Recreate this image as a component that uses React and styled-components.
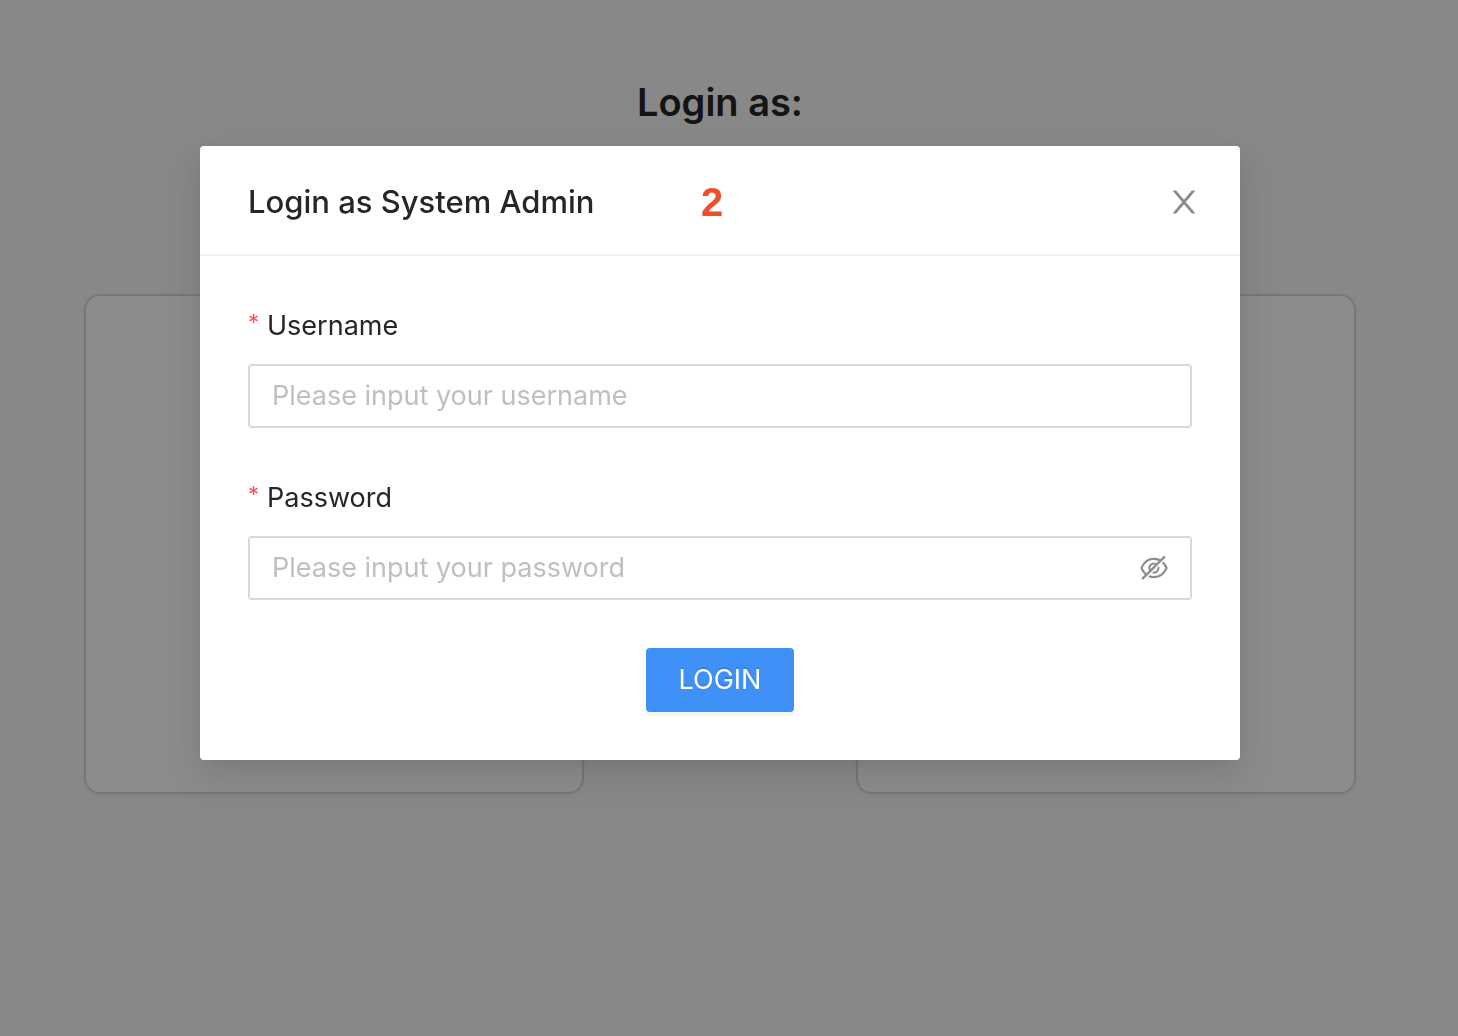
import React from "react";
import styled, { createGlobalStyle } from "styled-components";
import { AiOutlineEyeInvisible } from "react-icons/ai";

const GlobalStyle = createGlobalStyle`
  *, *::before, *::after { box-sizing: border-box; }
  body {
    margin: 0;
    background: #f8f8f8;
    color: #262626;
    font-family: Inter, "Liberation Sans", sans-serif;
    font-size: 27px;
    line-height: 44px;
  }
`;

const Page = styled.main`
  min-height: 100vh;
  padding: 72px 102px 0 84px;
`;

const PageTitle = styled.h1`
  margin: 0;
  font-size: 38px;
  font-weight: 600;
  line-height: 60px;
  text-align: center;
`;

const RoleList = styled.div`
  display: flex;
  justify-content: space-between;
  margin-top: 162px;
`;

const RoleCard = styled.section`
  width: 500px;
  height: 500px;
  background: #fff;
  border: 2px solid #d9d9d9;
  border-radius: 16px;
  box-shadow: 0 2px 4px rgba(0, 0, 0, 0.05);
`;

const Overlay = styled.div`
  position: fixed;
  inset: 0;
  display: flex;
  align-items: flex-start;
  justify-content: center;
  padding: 146px 18px 48px 0;
  background: rgba(0, 0, 0, 0.45);
`;

const Dialog = styled.div`
  width: 100%;
  max-width: 1040px;
  background: #fff;
  border-radius: 4px;
  box-shadow:
    0 6px 12px -8px rgba(0, 0, 0, 0.12),
    0 12px 32px 0 rgba(0, 0, 0, 0.08),
    0 18px 56px 16px rgba(0, 0, 0, 0.05);
`;

const DialogHeader = styled.header`
  display: grid;
  grid-template-columns: 1fr auto 1fr;
  align-items: center;
  padding: 34px 38px 30px 48px;
  border-bottom: 2px solid #f0f0f0;
`;

const DialogTitle = styled.h2`
  margin: 0;
  font-size: 31px;
  font-weight: 500;
  line-height: 44px;
`;

const StepNumber = styled.strong`
  padding-right: 26px;
  color: #f04e2a;
  font-family: "Liberation Sans", Arial, sans-serif;
  font-size: 40px;
  line-height: 44px;
`;

const IconButton = styled.button`
  display: flex;
  justify-self: end;
  padding: 0;
  border: 0;
  background: none;
  color: #8c8c8c;
  cursor: pointer;
`;

const Form = styled.form`
  display: flex;
  flex-direction: column;
  gap: 48px;
  padding: 48px;
`;

const Field = styled.div`
  display: flex;
  flex-direction: column;
  gap: 16px;
`;

const Label = styled.label`
  display: flex;
  align-items: flex-start;
  gap: 8px;
`;

const Required = styled.span`
  color: #ff4d4f;
  font-size: 22px;
  line-height: 36px;
`;

const InputFrame = styled.div`
  display: flex;
  align-items: center;
  height: 64px;
  padding: 0 20px 0 22px;
  border: 2px solid #d9d9d9;
  border-radius: 4px;

  &:focus-within { border-color: #4091f7; }
`;

const Input = styled.input`
  flex: 1;
  min-width: 0;
  padding: 0;
  border: 0;
  outline: 0;
  background: none;
  color: inherit;
  font: inherit;

  &::placeholder { color: #bfbfbf; opacity: 1; }
`;

const SubmitButton = styled.button`
  align-self: center;
  min-width: 148px;
  height: 64px;
  padding: 0 32px;
  border: 0;
  border-radius: 4px;
  background: #4091f7;
  box-shadow: 0 4px 0 rgba(0, 0, 0, 0.04);
  color: #fff;
  font: inherit;
  text-shadow: 0 -2px 0 rgba(0, 0, 0, 0.12);
  cursor: pointer;
`;

function CloseIcon() {
  return (
    <svg width="36" height="36" viewBox="0 0 1024 1024" fill="currentColor" aria-hidden="true">
      <path d="M563.8 512l262.5-312.9c4.4-5.2.7-13.1-6.1-13.1h-79.8c-4.7 0-9.2 2.1-12.3 5.7L511.6 449.8 295.1 191.7c-3-3.6-7.5-5.7-12.3-5.7H203c-6.8 0-10.5 7.9-6.1 13.1L459.4 512 196.9 824.9A7.95 7.95 0 0 0 203 838h79.8c4.7 0 9.2-2.1 12.3-5.7l216.5-258.1 216.5 258.1c3 3.6 7.5 5.7 12.3 5.7h79.8c6.8 0 10.5-7.9 6.1-13.1L563.8 512z" />
    </svg>
  );
}

function FormField({ id, label, action, ...inputProps }) {
  return (
    <Field>
      <Label htmlFor={id}>
        <Required aria-hidden="true">*</Required>
        {label}
      </Label>
      <InputFrame>
        <Input id={id} name={id} required {...inputProps} />
        {action}
      </InputFrame>
    </Field>
  );
}

export default function App() {
  return (
    <>
      <GlobalStyle />
      <Page>
        <PageTitle>Login as:</PageTitle>
        <RoleList>
          <RoleCard />
          <RoleCard />
        </RoleList>
      </Page>
      <Overlay>
        <Dialog role="dialog" aria-modal="true" aria-labelledby="dialog-title">
          <DialogHeader>
            <DialogTitle id="dialog-title">Login as System Admin</DialogTitle>
            <StepNumber>2</StepNumber>
            <IconButton type="button" aria-label="Close">
              <CloseIcon />
            </IconButton>
          </DialogHeader>
          <Form onSubmit={(event) => event.preventDefault()}>
            <FormField
              id="username"
              label="Username"
              type="text"
              placeholder="Please input your username"
            />
            <FormField
              id="password"
              label="Password"
              type="password"
              placeholder="Please input your password"
              action={
                <IconButton type="button" aria-label="Show password">
                  <AiOutlineEyeInvisible size={32} />
                </IconButton>
              }
            />
            <SubmitButton type="submit">LOGIN</SubmitButton>
          </Form>
        </Dialog>
      </Overlay>
    </>
  );
}
